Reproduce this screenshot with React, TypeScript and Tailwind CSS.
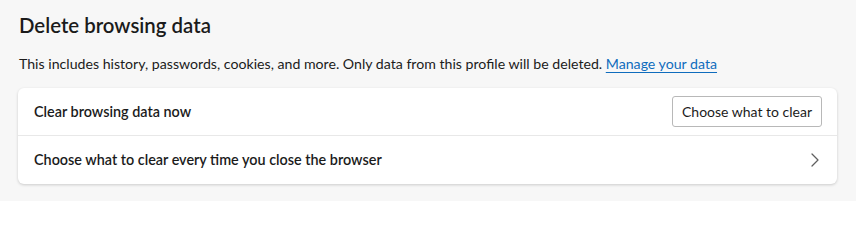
import { ChevronRight } from "lucide-react";

const font = { fontFamily: 'Lato, "Segoe UI", sans-serif' };

export default function App() {
  return (
    <div className="h-[201px] w-[856px] bg-[#f7f7f7] px-[18px] pt-[11px] text-[#1b1b1b]" style={font}>
      <h1 className="pl-px text-[20.4px] font-semibold leading-[28px]">Delete browsing data</h1>
      <p className="mt-[15px] pl-px text-[14.15px] leading-[20px]">
        This includes history, passwords, cookies, and more. Only data from this profile will be deleted.{" "}
        <a href="#" className="text-[#0f6cbd] underline underline-offset-[3px]">
          Manage your data
        </a>
      </p>
      <div className="mt-[14px] w-[819px] rounded-[6px] bg-white shadow-[0_1px_3px_rgba(0,0,0,0.18)]">
        <div className="flex h-[48px] items-center justify-between border-b border-[#e8e8e8] pl-4 pr-[15px]">
          <span className="text-[14.4px] font-semibold">Clear browsing data now</span>
          <button
            type="button"
            className="h-[31px] w-[150px] rounded-[3px] border border-[#b8b8b8] bg-white text-[14px]"
          >
            Choose what to clear
          </button>
        </div>
        <div className="flex h-[48px] items-center justify-between pl-4 pr-[10px]">
          <span className="text-[14.4px] font-semibold">Choose what to clear every time you close the browser</span>
          <ChevronRight className="h-6 w-6 text-[#5f5f5f]" strokeWidth={1.25} />
        </div>
      </div>
    </div>
  );
}
